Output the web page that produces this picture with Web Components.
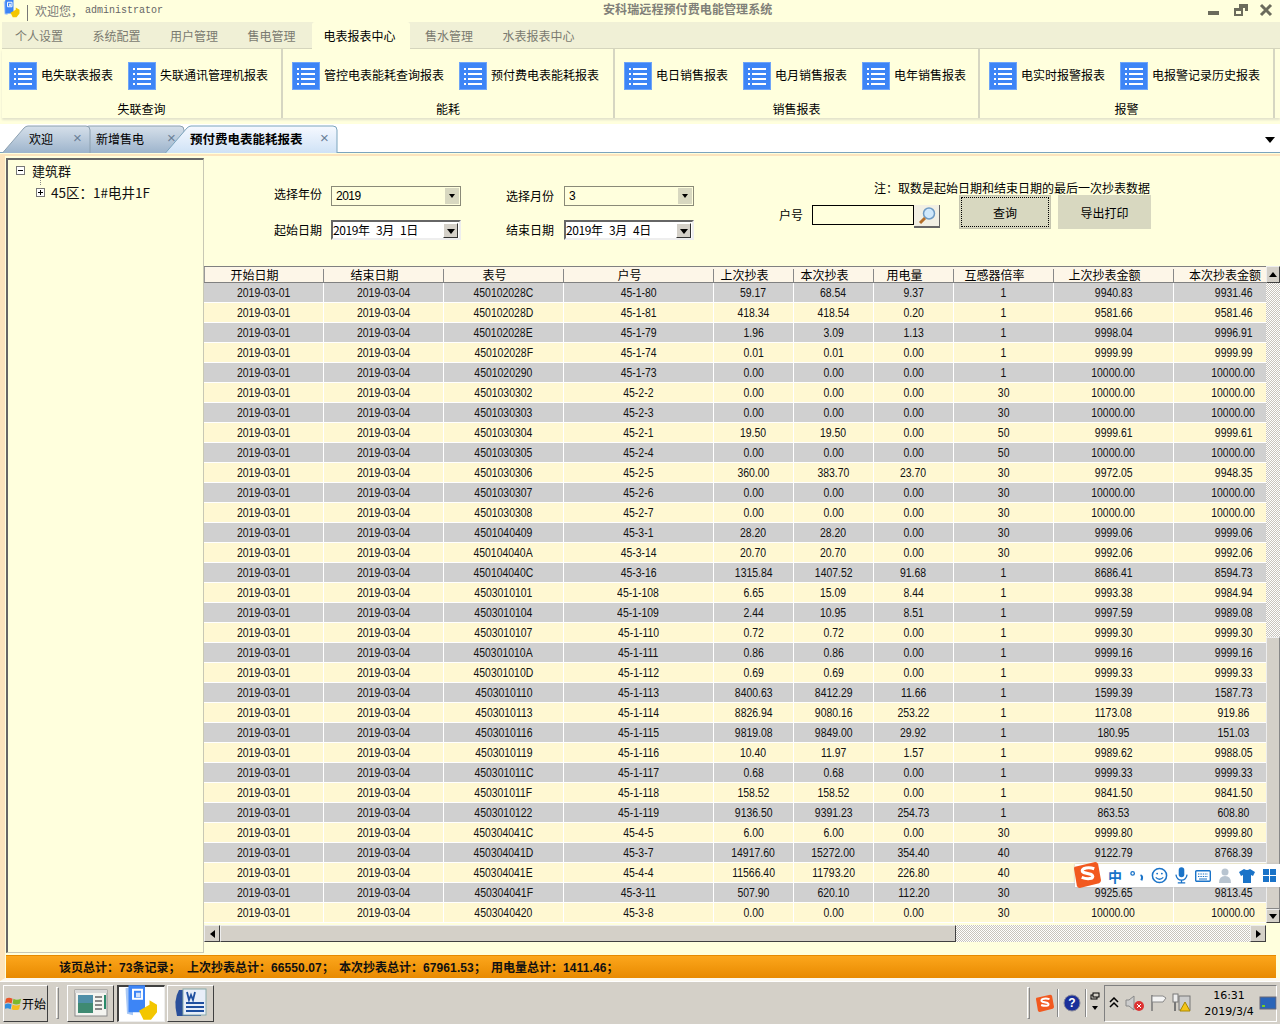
<!DOCTYPE html>
<html lang="zh"><head><meta charset="utf-8"><title>安科瑞远程预付费电能管理系统</title>
<style>
html,body{margin:0;padding:0;height:100%;overflow:hidden}
body{width:1280px;height:1024px;background:#ffffdd;font:12px "Noto Sans CJK SC","Liberation Sans",sans-serif;color:#000}
</style></head><body>
<app-shell></app-shell>
<script>
const FONT='"Noto Sans CJK SC","Liberation Sans",sans-serif';
const NUM='"Liberation Sans","Noto Sans CJK SC",sans-serif';
function def(name,css,html,init){
  customElements.define(name,class extends HTMLElement{
    connectedCallback(){
      if(this.shadowRoot)return;
      const r=this.attachShadow({mode:'open'});
      const h=typeof html==='function'?html(this):html;
      r.innerHTML='<style>'+css+'</style>'+h;
      if(init)init(this,r);
    }
  });
}
const listIcon='<svg width="28" height="28" viewBox="0 0 28 28"><rect width="28" height="28" fill="#3d85f6"/><rect x=".5" y=".5" width="27" height="27" fill="none" stroke="#6ea4f8"/><g fill="#fff"><rect x="5" y="6" width="2" height="2"/><rect x="9" y="6" width="14" height="2"/><rect x="5" y="11" width="2" height="2"/><rect x="9" y="11" width="14" height="2"/><rect x="5" y="16" width="2" height="2"/><rect x="9" y="16" width="14" height="2"/><rect x="5" y="21" width="2" height="2"/><rect x="9" y="21" width="14" height="2"/></g></svg>';
const appIcon=(s)=>`<svg width="${s}" height="${s}" viewBox="0 0 24 24"><path d="M1 2l5-1v19l-4-1z" fill="#a9c8f5"/><path d="M3 0h11v18H3z" fill="#3d85f6"/><path d="M6 3h6v6H6z" fill="none" stroke="#fff" stroke-width="1.3"/><rect x="8" y="5" width="3" height="3" fill="#cfe0fb"/><path d="M10 17l7-4v-3l5 3v5l-4 5h-5z" fill="#f3c600"/></svg>`;

def('win-controls',`:host{display:flex;align-items:center;padding-right:7px}svg{display:block}`,
`<svg width="16" height="14" viewBox="0 0 16 14" style="margin-right:11px"><rect x="2" y="8" width="11" height="4" fill="#6b6b5c"/></svg>
<svg width="16" height="14" viewBox="0 0 16 14" style="margin-right:10px"><path d="M6 1h9v7h-3V5H6z" fill="#6b6b5c"/><path d="M1 5h9v8H1z" fill="#6b6b5c"/><rect x="3" y="8" width="5" height="3" fill="#ffffdd"/></svg>
<svg width="14" height="14" viewBox="0 0 14 14"><path d="M2 2l10 10M12 2L2 12" stroke="#6b6b5c" stroke-width="3"/></svg>`);

def('title-bar',`:host{display:grid;grid-template-columns:603px auto 1fr;align-items:center;height:22px;background:#ffffdd;color:#777;font:12px ${FONT};white-space:nowrap;overflow:hidden}
.l{display:flex;align-items:center;padding-left:3px;height:22px}
.ic{width:18px;height:20px;margin-top:-3px}
.sep{width:1px;height:16px;background:#777;margin:3px 7px 0 6px}
.w{margin-top:-2px}
.mono{font:10px "Liberation Mono",monospace;color:#666;margin:-1px 0 0 2px}
.t{font-weight:700;color:#808078;margin-top:-5px;letter-spacing:.1px}
.r{justify-self:end;margin-top:-2px}`,
`<div class="l"><span class="ic">${appIcon(18)}</span><span class="sep"></span><span class="w">欢迎您，</span><span class="mono">administrator</span></div>
<div class="t">安科瑞远程预付费电能管理系统</div><win-controls class="r"></win-controls>`);

def('menu-bar',`:host{display:flex;height:27px;margin-left:2px;background:#f0f0d6;box-sizing:border-box;border-bottom:1px solid #d5d5bd;padding-left:1px;font:12px ${FONT};color:#7a7a70;align-items:flex-end}
span{display:block;margin-right:5.5px;height:26px;line-height:28px;white-space:nowrap;box-sizing:border-box;width:72px;text-align:center}
span.w{width:96px}
span.on{background:#ffffdd;color:#000;width:98px;padding-right:3px;margin:0 3px 0 -1px;border-radius:3px 3px 0 0;height:27px;position:relative;top:1px}`,
`<span>个人设置</span><span>系统配置</span><span>用户管理</span><span>售电管理</span><span class="on">电表报表中心</span><span>售水管理</span><span class="w">水表报表中心</span>`);

def('ribbon-item',`:host{display:flex;align-items:center;gap:4px;white-space:nowrap;font:12px ${FONT}}svg{display:block}.t{margin-top:-3px}`,
(e)=>`${listIcon}<span class="t"><slot></slot></span>`);
def('ribbon-group',`:host{display:flex;flex-direction:column;height:69px;box-sizing:border-box;border-right:2px solid #d6d6c2;padding:13px 0 0 9px;position:relative;flex:none}
.i{display:flex;gap:15px;height:28px}
.c{position:absolute;left:0;right:0;top:51px;text-align:center;font:12px ${FONT}}`,
(e)=>`<div class="i"><slot></slot></div><div class="c">${e.getAttribute('label')}</div>`);
def('ribbon-bar',`:host{display:flex;height:69px;margin-left:2px;background:#ffffdd;box-shadow:0 2px 2px #e4e4cc;flex:none}`,`<slot></slot>`);

const tabPath=(w,on)=>`<svg class="b" width="${w}" height="28" viewBox="0 0 ${w} 28"><defs><linearGradient id="g${w}" x1="0" y1="0" x2="0" y2="1">${on?'<stop offset="0" stop-color="#f6f9ff"/><stop offset="1" stop-color="#cfe2f6"/>':'<stop offset="0" stop-color="#d6e0ea"/><stop offset="1" stop-color="#9db4cc"/>'}</linearGradient></defs><path d="M.5 28L22 3q2-2 4-2H${w-5}q4 0 4 4V28" fill="url(#g${w})" stroke="${on?'#7ba4bd':'#8ca0b0'}"/></svg>`;
def('doc-tab',`:host{display:block;position:relative;height:28px;flex:none;font:12px ${FONT}}
.b{position:absolute;left:0;top:0;display:block}
.t{position:absolute;top:5px;white-space:nowrap}
.x{position:absolute;top:4px;font:15px "Liberation Sans",sans-serif;color:#6a7f96}
:host([active]) .t{font-weight:700;font-size:12.5px;top:4px}`,
(e)=>{const w=+e.getAttribute('w');
 e.style.width=w+'px';
 return tabPath(w,e.hasAttribute('active'))+`<span class="t" style="left:${e.getAttribute('tx')}px"><slot></slot></span><span class="x" style="left:${w-18}px">×</span>`;});
def('doc-tabs',`:host{display:flex;height:29px;margin-top:6px;background:#fff;border-bottom:1px solid #7ba4bd;box-sizing:border-box;padding-top:0;position:relative;flex:none;align-items:flex-end}
.arrow{position:absolute;right:5px;top:13px;width:0;height:0;border:5px solid transparent;border-top:6px solid #000;border-bottom:0}
.s{display:flex;margin-left:2px;margin-bottom:-1px}
::slotted(doc-tab:nth-child(1)){z-index:2}
::slotted(doc-tab:nth-child(2)){margin-left:-28px;z-index:1}
::slotted(doc-tab:nth-child(3)){margin-left:-20px;z-index:3}
`,`<div class="s"><slot></slot></div><div class="arrow"></div>`);

def('tree-panel',`:host{display:block;width:198px;flex:none;box-sizing:border-box;border:1px solid #c8c8b4;border-top:2px solid #666;border-left:2px solid #666;background:#ffffdd;font:13px ${FONT};padding:0 0 0 8px;color:#111}
.n{display:flex;align-items:center;height:22px;white-space:nowrap;position:relative;top:-1px}
.box{width:9px;height:9px;border:1px solid #777;box-sizing:border-box;position:relative;margin-right:7px;background:#fff;flex:none}
.box:before{content:"";position:absolute;left:1px;right:1px;top:3px;height:1px;background:#000}
.p:after{content:"";position:absolute;top:1px;bottom:1px;left:3px;width:1px;background:#000}
.c{padding-left:20px}
.c:before{content:"";position:absolute;left:24px;top:-4px;height:8px;border-left:1px dotted #888}
.big{font-size:13.5px;margin-left:-1px}`,
`<div class="n"><span class="box"></span>建筑群</div><div class="n c"><span class="box p"></span><span class="big">45区：1#电井1F</span></div>`);

def('combo-box',`:host{display:flex;height:20px;width:130px;box-sizing:border-box;border:1px solid #8a8a78;background:#ffffdd;align-items:center;font:12px ${NUM};padding-left:4px;position:relative}
.t{flex:1;letter-spacing:-.5px}
.a{width:14px;height:16px;background:#d8d8c0;margin-right:1px;display:flex;align-items:center;justify-content:center}
.a:after{content:"";border:3px solid transparent;border-top:4px solid #000;border-bottom:0}`,
`<span class="t"><slot></slot></span><span class="a"></span>`);

def('date-box',`:host{display:flex;height:20px;width:130px;box-sizing:border-box;border:2px solid;border-color:#666 #eee #eee #666;background:#fff;align-items:center;font:12px ${FONT};white-space:nowrap}
.t{flex:1;letter-spacing:-.4px;word-spacing:4px;margin-top:-1px}
.a{width:15px;height:15px;box-sizing:border-box;background:#d4d0c8;border:1px solid;border-color:#fff #333 #333 #fff;display:flex;align-items:center;justify-content:center;margin-right:1px}
.a:after{content:"";border:4px solid transparent;border-top:5px solid #000;border-bottom:0;margin-top:2px}`,
`<span class="t"><slot></slot></span><span class="a"></span>`);

def('act-btn',`:host{display:flex;align-items:center;justify-content:center;width:93px;height:34px;box-sizing:border-box;background:#d8d8c0;font:12px ${FONT};position:relative}
:host([focus]) .f{position:absolute;inset:2px;border:1px dotted #000}
:host([focus]){width:92px;box-shadow:inset 0 0 0 1px #c4c4ae}`,`<span class="f"></span><slot></slot>`);

def('search-form',`:host{display:flex;height:108px;box-sizing:border-box;padding:28px 0 0 70px;font:12px ${FONT};flex:none}
.g{display:grid;grid-template-columns:57px 130px 45px 48px 10px 130px;grid-template-rows:20px 20px;row-gap:14px;align-items:center}
.g span{white-space:nowrap}
.y1{margin-bottom:6px}
.y2{margin-bottom:2px}
.r{margin-left:85px;width:372px;position:relative}
.note{text-align:right;white-space:nowrap;margin:-7px 1px 0 0;height:17px;line-height:17px}
.row{display:flex;margin-top:5px;align-items:flex-start}
.lab{margin:5px 9px 0 0;width:24px;white-space:nowrap}
.input{width:102px;height:20px;box-sizing:border-box;border:1px solid #000;background:#ffffdd;margin-top:4px}
.sb{width:26px;height:23px;box-sizing:border-box;margin-top:4px;background:#f2f0e4;border-right:1px solid #666;border-bottom:2px solid #666;display:flex;align-items:center;justify-content:center}
.sb svg{display:block}
.btns{display:flex;gap:7px;margin:-6px 0 0 19px}`,
`<div class="g">
<span class="y1">选择年份</span><combo-box>2019</combo-box><span></span><span class="y2">选择月份</span><span></span><combo-box>3</combo-box>
<span class="y2">起始日期</span><date-box>2019年 3月 1日</date-box><span></span><span class="y2">结束日期</span><span></span><date-box>2019年 3月 4日</date-box>
</div>
<div class="r"><div class="note">注：取数是起始日期和结束日期的最后一次抄表数据</div>
<div class="row"><span class="lab">户号</span><span class="input"></span><span class="sb"><svg width="20" height="20" viewBox="0 0 20 20"><circle cx="12" cy="7.5" r="5.5" fill="#cfe8fb" stroke="#6e9bc4" stroke-width="1.5"/><path d="M8 12l-5 5" stroke="#b5702a" stroke-width="3"/></svg></span>
<span class="btns"><act-btn focus>查询</act-btn><act-btn>导出打印</act-btn></span></div></div>`);

const DATA=`450102028C 45-1-80 59.17 68.54 9.37 1 9940.83 9931.46
450102028D 45-1-81 418.34 418.54 0.20 1 9581.66 9581.46
450102028E 45-1-79 1.96 3.09 1.13 1 9998.04 9996.91
450102028F 45-1-74 0.01 0.01 0.00 1 9999.99 9999.99
4501020290 45-1-73 0.00 0.00 0.00 1 10000.00 10000.00
4501030302 45-2-2 0.00 0.00 0.00 30 10000.00 10000.00
4501030303 45-2-3 0.00 0.00 0.00 30 10000.00 10000.00
4501030304 45-2-1 19.50 19.50 0.00 50 9999.61 9999.61
4501030305 45-2-4 0.00 0.00 0.00 50 10000.00 10000.00
4501030306 45-2-5 360.00 383.70 23.70 30 9972.05 9948.35
4501030307 45-2-6 0.00 0.00 0.00 30 10000.00 10000.00
4501030308 45-2-7 0.00 0.00 0.00 30 10000.00 10000.00
4501040409 45-3-1 28.20 28.20 0.00 30 9999.06 9999.06
450104040A 45-3-14 20.70 20.70 0.00 30 9992.06 9992.06
450104040C 45-3-16 1315.84 1407.52 91.68 1 8686.41 8594.73
4503010101 45-1-108 6.65 15.09 8.44 1 9993.38 9984.94
4503010104 45-1-109 2.44 10.95 8.51 1 9997.59 9989.08
4503010107 45-1-110 0.72 0.72 0.00 1 9999.30 9999.30
450301010A 45-1-111 0.86 0.86 0.00 1 9999.16 9999.16
450301010D 45-1-112 0.69 0.69 0.00 1 9999.33 9999.33
4503010110 45-1-113 8400.63 8412.29 11.66 1 1599.39 1587.73
4503010113 45-1-114 8826.94 9080.16 253.22 1 1173.08 919.86
4503010116 45-1-115 9819.08 9849.00 29.92 1 180.95 151.03
4503010119 45-1-116 10.40 11.97 1.57 1 9989.62 9988.05
450301011C 45-1-117 0.68 0.68 0.00 1 9999.33 9999.33
450301011F 45-1-118 158.52 158.52 0.00 1 9841.50 9841.50
4503010122 45-1-119 9136.50 9391.23 254.73 1 863.53 608.80
450304041C 45-4-5 6.00 6.00 0.00 30 9999.80 9999.80
450304041D 45-3-7 14917.60 15272.00 354.40 40 9122.79 8768.39
450304041E 45-4-4 11566.40 11793.20 226.80 40 &nbsp; &nbsp;
450304041F 45-3-11 507.90 620.10 112.20 30 9925.65 9813.45
4503040420 45-3-8 0.00 0.00 0.00 30 10000.00 10000.00`.split('\n').map(l=>l.split(' '));
const HEAD=['开始日期','结束日期','表号','户号','上次抄表','本次抄表','用电量','互感器倍率','上次抄表金额','本次抄表金额'];
const COLS='120px 120px 120px 150px 80px 80px 80px 100px 120px 120px';

def('data-grid',`:host{display:block;width:1062px;height:657px;overflow:hidden;flex:none;font:12px ${NUM}}
.r{display:grid;grid-template-columns:${COLS};width:1190px;height:20px;box-sizing:border-box;border-bottom:1px solid #fff}
.c{text-align:center;line-height:21px;height:19px;border-right:1px solid #fff;white-space:nowrap;overflow:hidden;color:#111}
.c span{display:inline-block;transform:scaleX(.87)}
.r:nth-child(odd){background:#d0d0d0}
.r:nth-child(even){background:#fff8d2}
.h{display:grid;grid-template-columns:${COLS};width:1190px;height:17px;box-sizing:border-box;background:#fdf6e8;border-top:1px solid #808080;border-bottom:1px solid #808080;font:12px ${FONT};box-shadow:inset 1px 0 0 #999}
.h span{display:block;text-align:center;padding-right:18px;border-right:1px solid #888;margin:2px 0 0;height:13px;line-height:12px;white-space:nowrap;box-sizing:border-box}
.h span:last-child{border:0}`,
`<div class="h">${HEAD.map(t=>`<span>${t}</span>`).join('')}</div><div class="b">${DATA.map(d=>`<div class="r">${['2019-03-01','2019-03-04',...d].map(t=>`<div class="c"><span>${t}</span></div>`).join('')}</div>`).join('')}</div>`);

const checker='background-color:#fff;background-image:conic-gradient(#c8c4bc 25%,#fff 0 50%,#c8c4bc 0 75%,#fff 0);background-size:2px 2px';
const scrollBtn='background:#d4d0c8;box-sizing:border-box;border:1px solid;border-color:#eee #404040 #404040 #eee;display:flex;align-items:center;justify-content:center;flex:none';
def('v-scroll',`:host{display:flex;flex-direction:column;width:14px;height:657px;flex:none;${checker}}
.b{height:17px;${scrollBtn}}
.b:last-child{height:14px}
.u:after{content:"";border:4px solid transparent;border-bottom:5px solid #000;border-top:0}
.d:after{content:"";border:4px solid transparent;border-top:5px solid #000;border-bottom:0}
.t{flex:1}
.th{height:272px;background:#d4d0c8;border:1px solid;border-color:#eee #888 #888 #eee;box-sizing:border-box}`,
`<div class="b u"></div><div class="t"></div><div class="th"></div><div class="b d"></div>`);
def('h-scroll',`:host{display:flex;height:17px;width:1062px;flex:none;margin-top:2px;${checker}}
.b{width:16px;${scrollBtn}}
.l:after{content:"";border:4px solid transparent;border-right:5px solid #000;border-left:0}
.r:after{content:"";border:4px solid transparent;border-left:5px solid #000;border-right:0}
.th{width:736px;background:#d4d0c8;border:1px solid;border-color:#eee #404040 #404040 #eee;box-sizing:border-box}
.t{flex:1}`,
`<div class="b l"></div><div class="th"></div><div class="t"></div><div class="b r"></div>`);

def('report-panel',`:host{display:flex;flex-direction:column;flex:1;min-width:0}
.row{display:flex}`,
`<search-form></search-form><div class="row"><data-grid></data-grid><v-scroll></v-scroll></div><h-scroll></h-scroll>`);

def('status-bar',`:host{display:block;height:23px;box-sizing:border-box;margin:2px 4px 0 0;background:linear-gradient(#fca61c,#e88a00);border-top:1px solid #e68a00;font:700 12px ${FONT};line-height:21px;padding-left:53px;white-space:nowrap;color:#111;flex:none}
b{font:700 12px ${NUM};letter-spacing:.1px}
span{display:inline-block}
.a{width:128px}.b{width:152px}`,
`<span class="a">该页总计：<b>73</b>条记录；</span><span class="b">上次抄表总计：<b>66550.07</b>；</span><span class="b">本次抄表总计：<b>67961.53</b>；</span><span>用电量总计：<b>1411.46</b>；</span>`);

const win=`<svg width="17" height="17" viewBox="0 0 18 18"><path d="M1 4q3-2 7 0l-1 5q-4-2-7 0z" fill="#e8552a"/><path d="M9 4q3 2 8 0l-1 5q-4 2-8 0z" fill="#7cb92e"/><path d="M0 10q3-2 7 0l-1 5q-4-2-7 0z" fill="#2f8fdf"/><path d="M8 10q4 2 8 0l-1 5q-4 2-8 0z" fill="#f5bd1f"/></svg>`;
const taskIcons=[
`<svg width="34" height="28" viewBox="0 0 34 28"><rect x="1" y="1" width="32" height="26" fill="#f4f4f0" stroke="#8a8a8a"/><rect x="1" y="1" width="32" height="3" fill="#d8d8d8"/><rect x="4" y="6" width="15" height="18" fill="#3f8a72"/><path d="M4 6h15v8H4z" fill="#4f8fa8"/><g fill="#888"><rect x="21" y="7" width="7" height="2"/><rect x="21" y="11" width="7" height="2"/><rect x="21" y="15" width="7" height="2"/><rect x="21" y="19" width="7" height="2"/></g><rect x="30" y="6" width="2" height="14" fill="#2a8a6a"/></svg>`,
`<svg width="36" height="38" viewBox="0 0 24 25">${appIcon(24).replace(/<\/?svg[^>]*>/g,'')}</svg>`,
`<svg width="36" height="32" viewBox="0 0 36 32"><path d="M6 3q-6 10-2 26h24V3z" fill="#2a4f9a"/><rect x="10" y="2" width="23" height="26" fill="#e8eef8" stroke="#8aa"/><g fill="#1f4f9f"><rect x="13" y="15" width="18" height="2"/><rect x="13" y="19" width="18" height="2"/><rect x="13" y="23" width="18" height="2"/></g><path d="M14 5l2 8 2-5 2 5 2-8" fill="none" stroke="#1f4f9f" stroke-width="1.8"/></svg>`];
const sLogo=(s)=>`<svg width="${s}" height="${s}" viewBox="0 0 28 28"><path d="M1 6l21-5q2 0 3 2l3 17q0 2-2 3L6 28q-2 0-3-2L0 8q0-2 1-2z" fill="#f2591f"/><path d="M21 8q-6-2-11 0-3 2 0 4l8 2q3 2 0 4-5 1-10-1" fill="none" stroke="#fff" stroke-width="3.2"/></svg>`;
def('task-bar',`:host{display:flex;align-items:center;height:43px;flex:none;background:#d4d0c8;border-top:1px solid #fff;box-sizing:border-box;padding:0 3px;font:12px ${FONT}}
.btn{box-sizing:border-box;height:37px;background:#d4d0c8;border:1px solid;border-color:#fff #404040 #404040 #fff;display:flex;align-items:center;justify-content:center;flex:none}
.start{width:45px;font-size:12px;gap:0;justify-content:flex-start;padding-left:1px}
.sep{width:3px;height:32px;border:1px solid;border-color:#fff #888 #888 #fff;box-sizing:border-box;margin:0 8px;flex:none}
.t{width:47px;margin-right:3px}
.t.on{background:#fff;border-color:#404040 #eee #eee #404040;border-width:2px 1px 1px 2px;width:48px;margin-right:2px}
.sp{flex:1}
.v{width:1px;height:28px;background:#888;border-right:1px solid #fff;flex:none}
.tray{width:173px;height:37px;box-sizing:border-box;border:1px solid;border-color:#808080 #fff #fff #808080;display:flex;align-items:center;padding-left:4px;margin-left:4px;flex:none}
.clock{font:11px "DejaVu Sans",sans-serif;text-align:center;line-height:16px;width:56px;margin-top:1px;flex:none}
svg{display:block;flex:none}`,
`<div class="btn start">${win}<span>开始</span></div><span class="sep"></span>
<div class="btn t">${taskIcons[0]}</div><div class="btn t on">${taskIcons[1]}</div><div class="btn t">${taskIcons[2]}</div>
<span class="sp"></span><span class="sep" style="margin:0 6px 0 0"></span>
${sLogo(18)}<span class="v" style="margin:0 4px 0 3px"></span>
<svg width="18" height="18" viewBox="0 0 18 18"><circle cx="9" cy="9" r="8" fill="#1a2f9a" stroke="#889"/><text x="9" y="13" font-size="12" font-weight="700" text-anchor="middle" fill="#fff" font-family="Liberation Sans">?</text></svg><span class="v" style="margin:0 3px 0 4px"></span>
<svg width="10" height="22" viewBox="0 0 10 22"><rect x="1" y="3" width="6" height="4" fill="none" stroke="#000"/><rect x="3" y="1" width="6" height="4" fill="#d4d0c8" stroke="#000"/><path d="M2 14h6l-3 4z" fill="#000"/></svg>
<div class="tray">
<svg width="10" height="12" viewBox="0 0 10 12"><path d="M1 5l4-4 4 4M1 10l4-4 4 4" fill="none" stroke="#000" stroke-width="1.5"/></svg>
<svg width="20" height="18" viewBox="0 0 20 18" style="margin-left:6px"><path d="M1 6h3l5-4v14l-5-4H1z" fill="#ccc" stroke="#888"/><circle cx="14" cy="12" r="5" fill="#d33"/><path d="M12 10l4 4M16 10l-4 4" stroke="#fff"/></svg>
<svg width="18" height="18" viewBox="0 0 18 18" style="margin-left:4px"><path d="M3 1v16" stroke="#777" stroke-width="1.5"/><path d="M3 2h11l3 2-3 4H3z" fill="#f4f4f4" stroke="#888"/></svg>
<svg width="20" height="20" viewBox="0 0 20 20" style="margin-left:5px"><rect x="1" y="1" width="5" height="8" fill="#eee" stroke="#777"/><path d="M3 9v9" stroke="#777" stroke-width="2"/><rect x="7" y="3" width="11" height="14" fill="#ccc" stroke="#777"/><path d="M13 9l5 9H8z" fill="#f5c518" stroke="#a80"/></svg>
<div class="clock" style="margin-left:9px">16:31<br>2019/3/4</div>
<svg width="18" height="14" viewBox="0 0 18 14" style="margin-left:2px"><rect x="1" y="1" width="16" height="12" fill="#2a64b8" stroke="#667"/><rect x="3" y="9" width="3" height="2" fill="#7c2"/></svg>
</div>`);

def('ime-bar',`:host{position:absolute;left:1075px;top:864px;width:205px;height:23px;background:#fff;display:flex;align-items:center;box-shadow:0 0 2px #bbb}
.s{position:absolute;left:-1px;top:-3px}
.i{display:grid;grid-template-columns:repeat(8,22px);justify-items:center;align-items:center;margin-left:29px;color:#1a73c8;font:700 14px ${FONT}}
svg{display:block}`,
`<span class="s">${sLogo(27)}</span><div class="i"><span>中</span>
<svg width="16" height="14" viewBox="0 0 18 16"><circle cx="4" cy="5" r="2" fill="none" stroke="#1a73c8" stroke-width="1.5"/><path d="M13 7q3 1 1 6" stroke="#1a73c8" stroke-width="2.4" fill="none"/></svg>
<svg width="17" height="17" viewBox="0 0 18 18"><circle cx="9" cy="9" r="7.5" fill="none" stroke="#1a73c8" stroke-width="1.6"/><circle cx="6.5" cy="7" r="1" fill="#1a73c8"/><circle cx="11.5" cy="7" r="1" fill="#1a73c8"/><path d="M5 11q4 4 8 0" fill="none" stroke="#1a73c8" stroke-width="1.4"/></svg>
<svg width="13" height="17" viewBox="0 0 14 18"><rect x="4" y="0" width="6" height="11" rx="3" fill="#1a73c8"/><path d="M1 8q1 6 6 6t6-6M7 14v3M3 17h8" fill="none" stroke="#1a73c8" stroke-width="1.4"/></svg>
<svg width="16" height="14" viewBox="0 0 16 14"><rect x=".7" y="1.7" width="14.6" height="10.6" rx="1" fill="none" stroke="#1a73c8" stroke-width="1.4"/><path d="M3 5h10M3 7.5h10" stroke="#1a73c8" stroke-dasharray="1.4 1"/><path d="M4 10h8" stroke="#1a73c8"/></svg>
<svg width="14" height="16" viewBox="0 0 14 16"><circle cx="7" cy="4" r="3.5" fill="#b8c4d0"/><path d="M1 15q0-7 6-7t6 7z" fill="#b8c4d0"/></svg>
<svg width="16" height="16" viewBox="0 0 16 16"><path d="M5 1L0 4l2 4 2-1v8h8V7l2 1 2-4-5-3q-3 2-6 0z" fill="#1a73c8"/></svg>
<svg width="13" height="13" viewBox="0 0 13 13" fill="#1a73c8"><rect width="6" height="6"/><rect x="7" width="6" height="6"/><rect y="7" width="6" height="6"/><rect x="7" y="7" width="6" height="6"/></svg>
</div>`);

def('app-shell',`:host{display:flex;flex-direction:column;width:1280px;height:1024px;position:relative;background:#ffffdd;overflow:hidden}
.frame{flex:1;display:flex;flex-direction:column;min-height:0;box-sizing:border-box;border-left:5px solid #fce4bd;border-top:2px solid #fce4bd;margin-top:1px;padding:2px 0 0 1px;border-bottom:3px solid #fdf9ee}
.work{flex:1;display:flex;min-height:0}`,
`<title-bar></title-bar><menu-bar></menu-bar>
<ribbon-bar>
<ribbon-group label="失联查询" style="width:281px;padding-left:7px"><ribbon-item>电失联表报表</ribbon-item><ribbon-item>失联通讯管理机报表</ribbon-item></ribbon-group>
<ribbon-group label="能耗" style="width:332px"><ribbon-item>管控电表能耗查询报表</ribbon-item><ribbon-item>预付费电表能耗报表</ribbon-item></ribbon-group>
<ribbon-group label="销售报表" style="width:365px"><ribbon-item>电日销售报表</ribbon-item><ribbon-item>电月销售报表</ribbon-item><ribbon-item>电年销售报表</ribbon-item></ribbon-group>
<ribbon-group label="报警" style="width:295px"><ribbon-item>电实时报警报表</ribbon-item><ribbon-item>电报警记录历史报表</ribbon-item></ribbon-group>
</ribbon-bar>
<doc-tabs><doc-tab w="89" tx="27">欢迎</doc-tab><doc-tab w="122" tx="33">新增售电</doc-tab><doc-tab w="173" tx="25" active>预付费电表能耗报表</doc-tab></doc-tabs>
<div class="frame"><div class="work"><tree-panel></tree-panel><report-panel></report-panel></div><status-bar></status-bar></div>
<task-bar></task-bar><ime-bar></ime-bar>`);
</script>
</body></html>
